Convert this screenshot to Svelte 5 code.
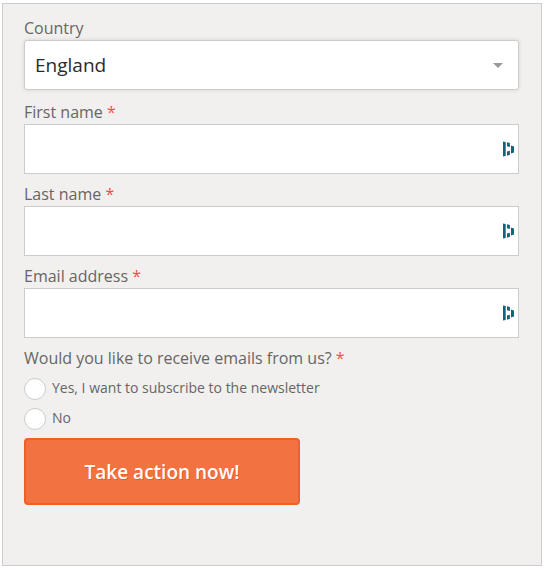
<script>
	let country = $state('England');
	let subscribe = $state('');

	let person = $state({ first: '', last: '', email: '' });

	const countries = ['England', 'Northern Ireland', 'Scotland', 'Wales'];

	const fields = [
		{ id: 'first', label: 'First name', type: 'text' },
		{ id: 'last', label: 'Last name', type: 'text' },
		{ id: 'email', label: 'Email address', type: 'email' }
	];

	const options = [
		{ value: 'yes', label: 'Yes, I want to subscribe to the newsletter' },
		{ value: 'no', label: 'No' }
	];
</script>

<form class="card" onsubmit={(e) => e.preventDefault()}>
	<div class="field country">
		<label for="country">Country</label>
		<div class="control">
			<select id="country" bind:value={country}>
				{#each countries as name}
					<option>{name}</option>
				{/each}
			</select>
			<svg class="arrow" width="10" height="5" viewBox="0 0 10 5" aria-hidden="true">
				<path d="M0 0h10L5 5z" fill="#999" />
			</svg>
		</div>
	</div>

	{#each fields as field}
		<div class="field">
			<label for={field.id}>{field.label} <span class="required">*</span></label>
			<div class="control">
				<input class="text" id={field.id} type={field.type} bind:value={person[field.id]} required />
				<!-- password manager mark -->
				<svg class="mark" width="11" height="16" viewBox="0 0 11 16" aria-hidden="true">
					<path
						d="M0 .4L2.7 1V15L0 15.6zM4 1.2l2.9.9v3.8L4 5.2zM4 10.5l2.9-.8v4.1L4 14.8zM8 4.6l3 .8v6.2l-3 .8z"
						fill="#0e6678"
					/>
				</svg>
			</div>
		</div>
	{/each}

	<fieldset>
		<legend>Would you like to receive emails from us? <span class="required">*</span></legend>
		<div class="options">
			{#each options as option}
				<label class="option">
					<input type="radio" name="subscribe" value={option.value} bind:group={subscribe} />
					<span>{option.label}</span>
				</label>
			{/each}
		</div>
	</fieldset>

	<button type="submit">Take action now!</button>
</form>

<style>
	:global(body) {
		background: #fff;
	}

	.card {
		box-sizing: border-box;
		margin: 3px 5px 4px 2px;
		padding: 12px 22px 60px 21px;
		border: 1px solid #ccc;
		background: #f1f0ee;
		color: #666;
		font: 16px/24px 'Open Sans', sans-serif;
	}

	.field {
		margin-bottom: 8px;
	}

	.country {
		margin-bottom: 10px;
	}

	.field label {
		display: block;
	}

	.required {
		color: #fb4b4b;
	}

	.control {
		position: relative;
	}

	select,
	.text {
		display: block;
		box-sizing: border-box;
		width: 100%;
		height: 50px;
		margin: 0;
		padding: 0 10px;
		border: 1px solid #ccc;
		border-radius: 0;
		background: #fff;
		color: #2b2b2b;
		font: 19px/28px 'Open Sans', sans-serif;
	}

	select {
		appearance: none;
		border-radius: 3px;
		box-shadow: 0 0 4px rgba(0, 0, 0, 0.12);
	}

	.arrow {
		position: absolute;
		top: 23px;
		right: 16px;
		pointer-events: none;
	}

	.mark {
		position: absolute;
		top: 17px;
		right: 5px;
	}

	fieldset {
		min-width: 0;
		margin: 0;
		padding: 0;
		border: 0;
	}

	legend {
		padding: 0;
	}

	.options {
		display: grid;
		gap: 8px;
		padding: 8px 0;
	}

	.option {
		display: flex;
		align-items: flex-start;
		gap: 6px;
		font-size: 14px;
		line-height: 20px;
	}

	.option input {
		appearance: none;
		box-sizing: border-box;
		flex: none;
		width: 22px;
		height: 22px;
		margin: 0;
		border: 1px solid #ccc;
		border-radius: 50%;
		background: #fff;
	}

	.option input:checked {
		border: 6px solid #f16029;
	}

	button {
		display: block;
		box-sizing: border-box;
		width: 276px;
		max-width: 100%;
		height: 67px;
		border: 2px solid #f15f28;
		border-radius: 4px;
		background: #f27242;
		color: #fff;
		font: 600 19px/28px 'Open Sans', sans-serif;
		text-shadow: 1px 1px 0 #f15a22;
		cursor: pointer;
	}
</style>
